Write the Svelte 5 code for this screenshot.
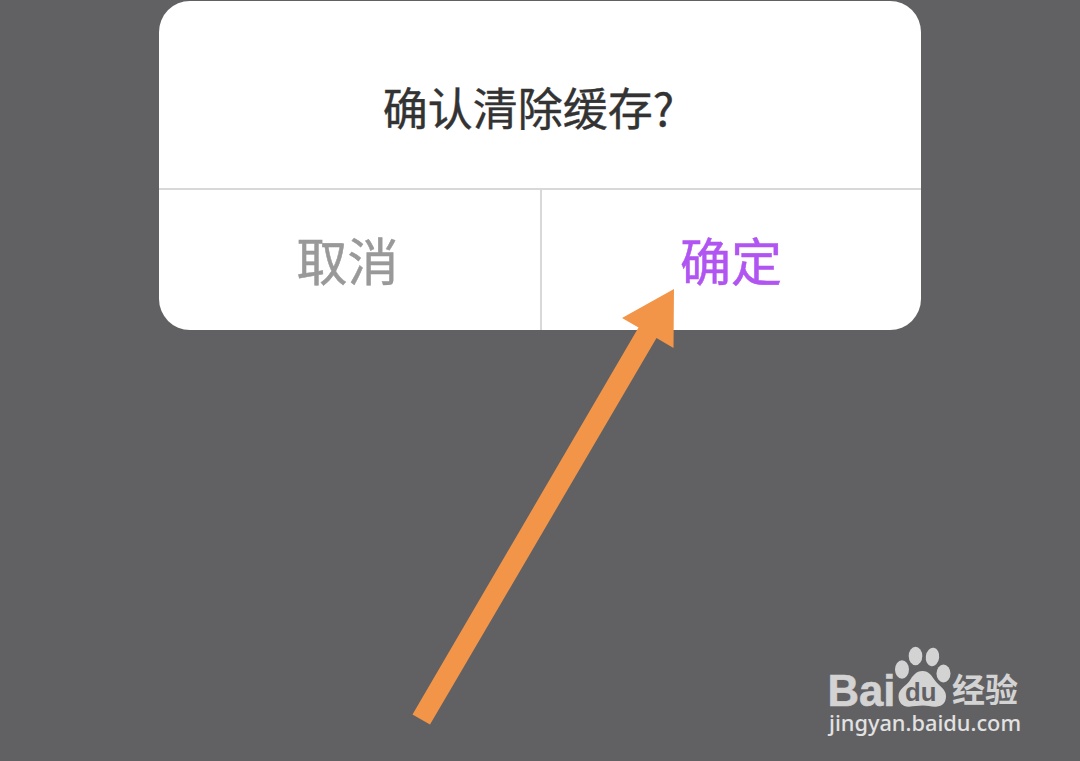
<script>
    let visible = true

    const close = () => {
        visible = false
    }
</script>

<div class="screen">
  {#if visible}
    <div class="dialog" role="dialog" aria-modal="true">
      <div class="message">确认清除缓存?</div>
      <div class="actions">
        <button class="cancel" on:click={close}>取消</button>
        <button class="confirm" on:click={close}>确定</button>
      </div>
    </div>
  {/if}

  <svg class="pointer" width="264" height="438" viewBox="0 0 264 438" aria-hidden="true">
    <path d="M262 1 L210 30 L226.500 39.500 L0.500 426.500 L18 436.500 L244.500 50 L261.500 60 Z"/>
  </svg>

  <svg class="watermark" width="220" height="115" viewBox="0 0 220 115">
    <text class="brand" x="12.500" y="70.500" textLength="68" lengthAdjust="spacingAndGlyphs">Bai</text>
    <g class="paw">
      <ellipse cx="87" cy="34.500" rx="7" ry="9.200"/>
      <ellipse cx="100.500" cy="21" rx="6.800" ry="9.300"/>
      <ellipse cx="117.500" cy="22" rx="6.700" ry="9.300" transform="rotate(8 117.500 22)"/>
      <ellipse cx="128.500" cy="38.500" rx="7" ry="9"/>
      <path d="M107.500 36 C101 36 97.500 41 94.500 46 C91 51 83.500 54 83.500 61 C83.500 68 88 72 94 71.700 C99 71.400 103 70.600 108 70.600 C113 70.600 116 72 121 71.700 C128 71.300 131 67 131 61 C131 54 124 51 120 45.500 C116.500 40.500 114 36 107.500 36 Z"/>
    </g>
    <text class="du" x="90" y="65.500" textLength="31.500" lengthAdjust="spacingAndGlyphs">du</text>
    <text class="section" x="137" y="67" textLength="66" lengthAdjust="spacingAndGlyphs">经验</text>
    <text class="site" x="14" y="95.500" textLength="192" lengthAdjust="spacingAndGlyphs">jingyan.baidu.com</text>
  </svg>
</div>

<style>
    :global(body) {
        margin: 0;
        background: #616163;
    }

    .screen {
        position: relative;
        box-sizing: border-box;
        height: 761px;
        padding-top: 1px;
        overflow: hidden;
        background: #616163;
        font-family: "Noto Sans CJK SC", sans-serif;
    }

    .dialog {
        display: flex;
        flex-direction: column;
        width: 762px;
        height: 329px;
        margin: 0 auto;
        border-radius: 31px;
        overflow: hidden;
        background: #fff;
    }

    .message {
        box-sizing: border-box;
        height: 187px;
        padding: 74px 23px 0 0;
        color: #333;
        font-size: 45px;
        line-height: 64px;
        text-align: center;
        -webkit-text-stroke: 0.4px #333;
    }

    .actions {
        display: grid;
        grid-template-columns: 383px 1fr;
        flex: 1;
        border-top: 2px solid #d8d8d8;
    }

    button {
        margin: 0;
        padding: 0 0 2px;
        border: 0;
        background: none;
        font-family: inherit;
        font-size: 51px;
        line-height: 60px;
        cursor: pointer;
    }

    .cancel {
        padding-right: 4px;
        border-right: 2px solid #d8d8d8;
        color: #999;
        -webkit-text-stroke: 0.5px #999;
    }

    .confirm {
        padding-right: 1px;
        color: #b055f2;
        -webkit-text-stroke: 0.5px #b055f2;
    }

    .pointer {
        position: absolute;
        left: 412px;
        top: 288px;
        fill: #f39549;
        pointer-events: none;
    }

    .watermark {
        position: absolute;
        left: 815px;
        top: 635px;
        fill: #d3d3d3;
    }

    .brand {
        font-family: "Liberation Sans", sans-serif;
        font-size: 44px;
        font-weight: bold;
        stroke: #d3d3d3;
        stroke-width: 0.6;
    }

    .du {
        fill: #616163;
        font-family: "Liberation Sans", sans-serif;
        font-size: 26px;
        font-weight: bold;
    }

    .section {
        font-size: 33px;
        font-weight: 700;
    }

    .site {
        fill: #e2e2e2;
        font-family: "Noto Sans", sans-serif;
        font-size: 22px;
        font-weight: 500;
    }
</style>
